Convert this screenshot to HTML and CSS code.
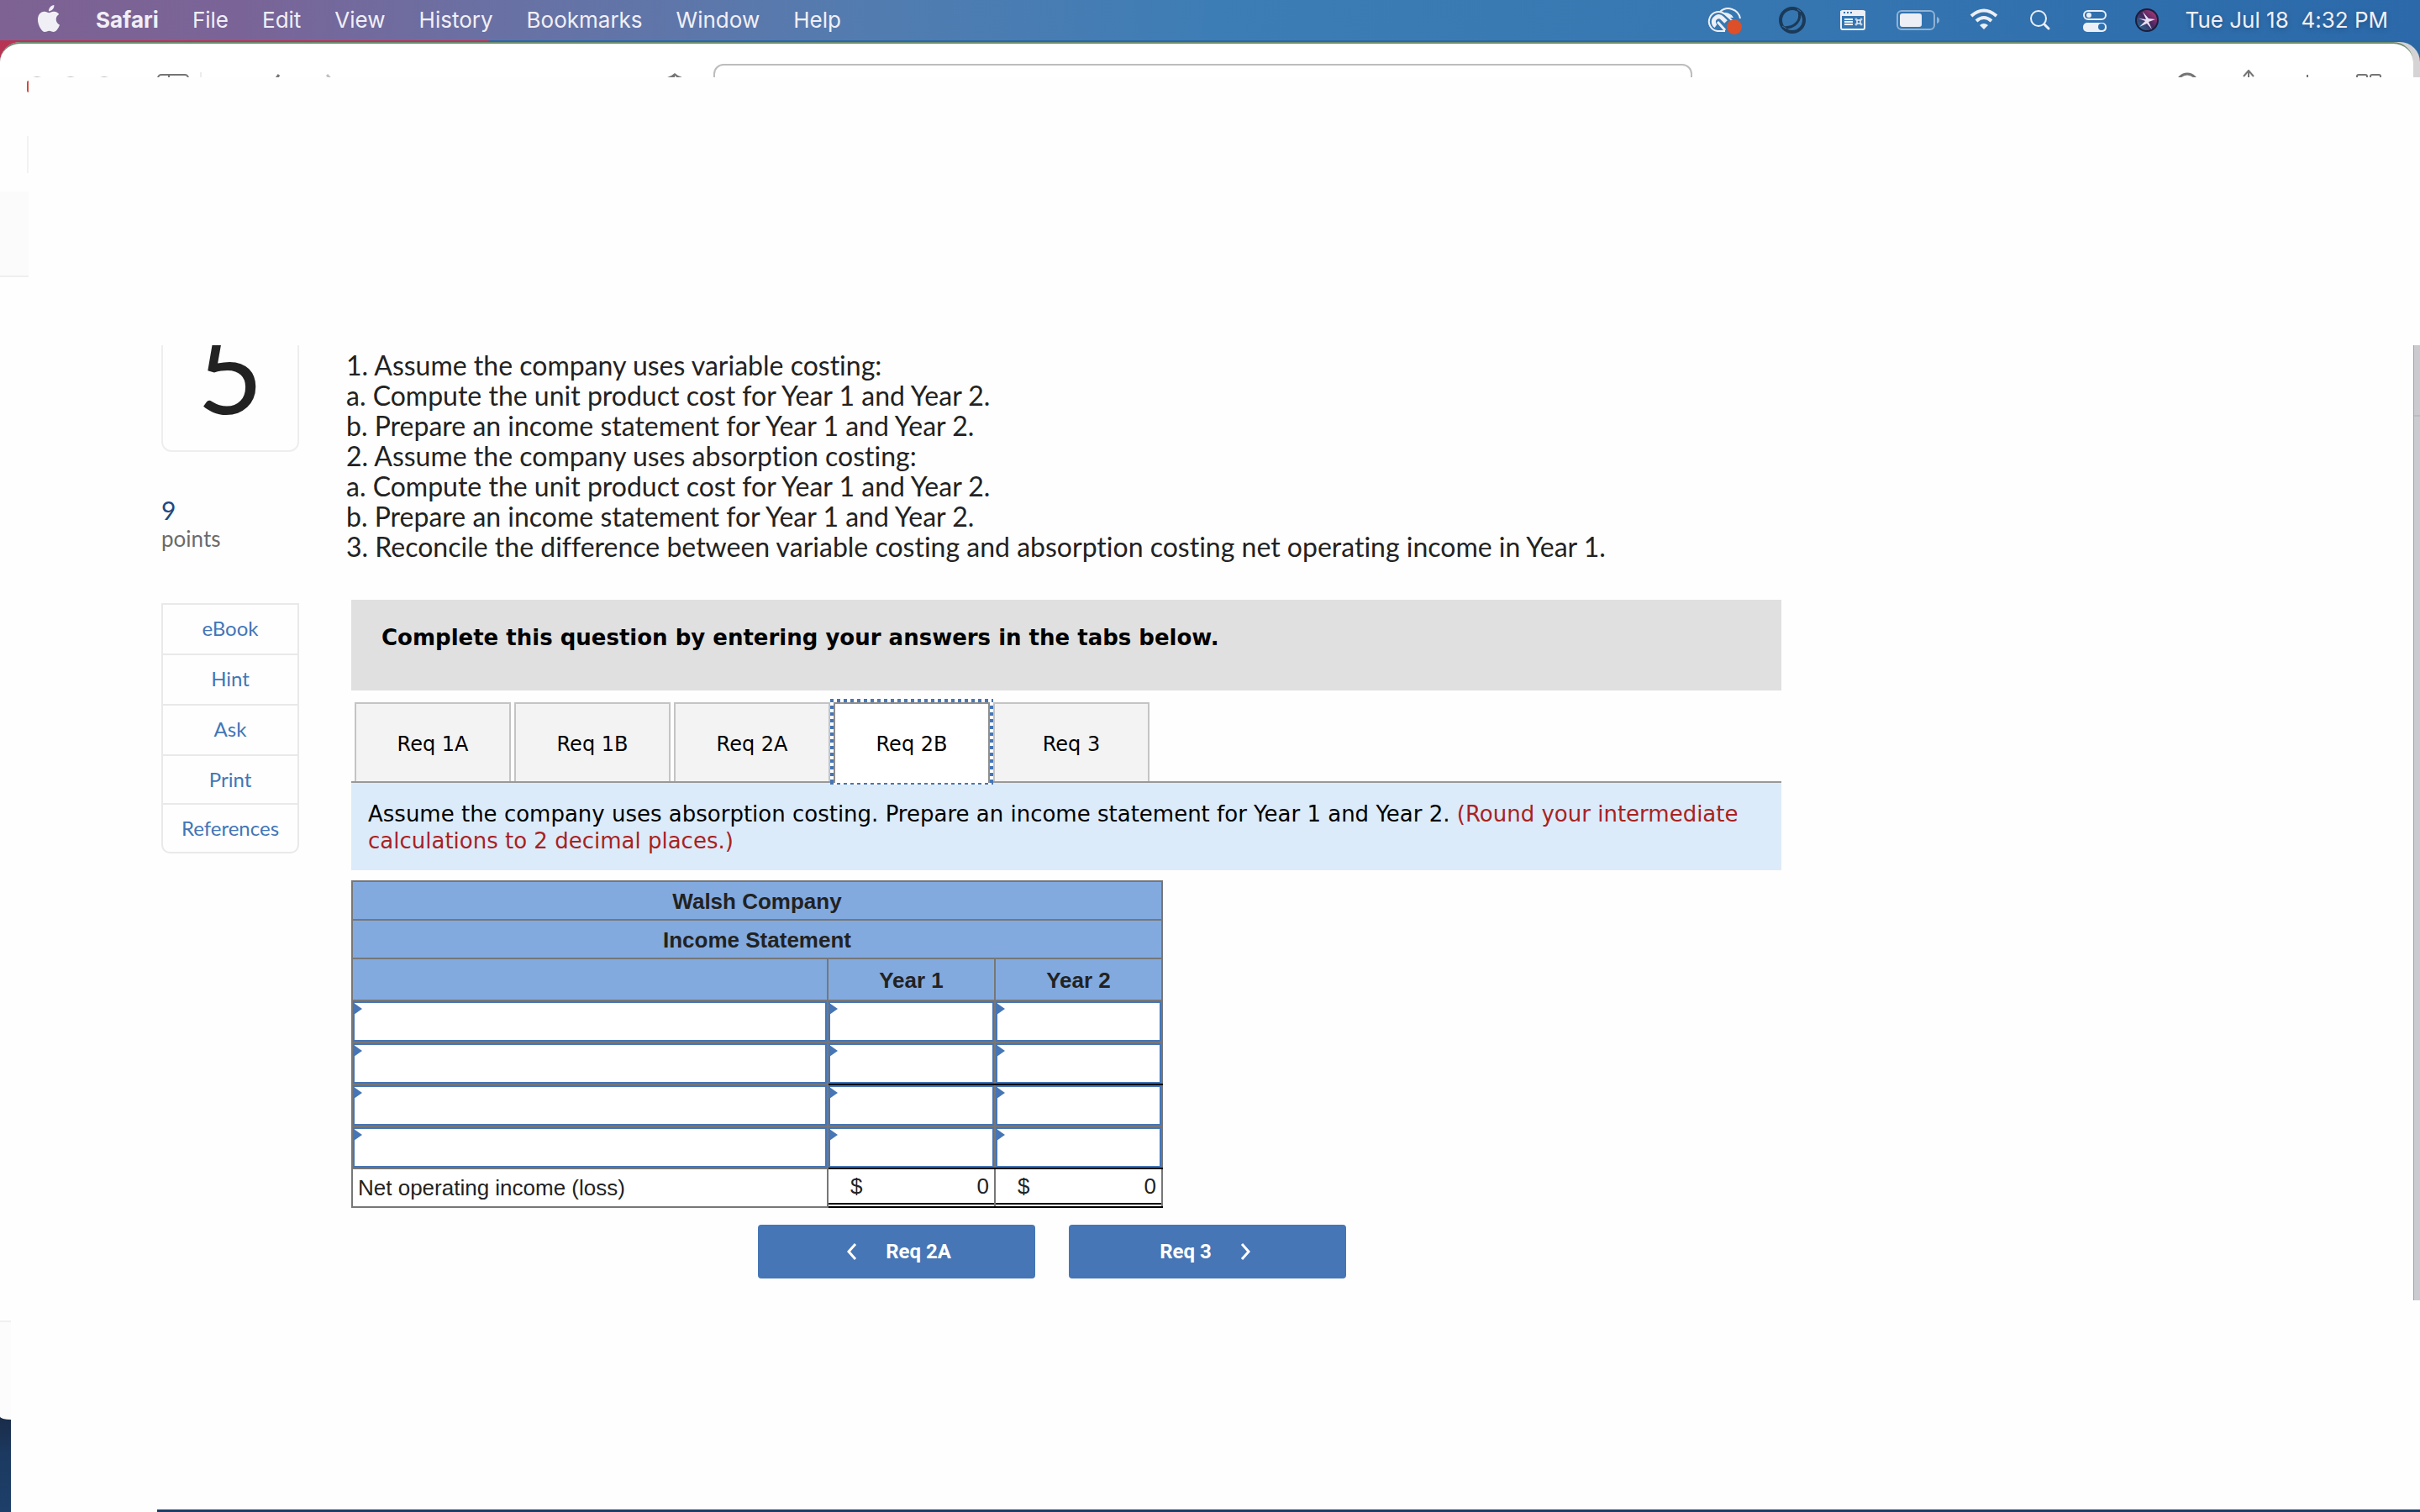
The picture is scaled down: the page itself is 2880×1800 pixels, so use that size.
FILE: index.html
```
<!DOCTYPE html>
<html lang="en">
<head>
  <meta charset="UTF-8" />
  <meta name="viewport" content="width=device-width, initial-scale=1.0" />
  <title>Walsh Company - Income Statement</title>
  <link rel="stylesheet" href="styles.css">
</head>
<body>
  <header class="menubar">
    <nav class="menus">
      <button class="apple" aria-label="Apple menu">
        <svg width="32" height="32" viewBox="0 0 24 24" fill="currentColor"><path d="M12.152 6.896c-.948 0-2.415-1.078-3.96-1.04-2.04.027-3.91 1.183-4.961 3.014-2.117 3.675-.546 9.103 1.519 12.09 1.013 1.454 2.208 3.09 3.792 3.039 1.52-.065 2.09-.987 3.935-.987 1.831 0 2.35.987 3.96.948 1.637-.026 2.676-1.48 3.676-2.948 1.156-1.688 1.636-3.325 1.662-3.415-.039-.013-3.182-1.221-3.22-4.857-.026-3.04 2.48-4.494 2.597-4.559-1.429-2.09-3.623-2.324-4.39-2.376-2-.156-3.675 1.09-4.61 1.09zM15.53 3.83c.843-1.012 1.4-2.427 1.245-3.83-1.207.052-2.662.805-3.532 1.818-.78.896-1.454 2.338-1.273 3.714 1.338.104 2.715-.688 3.559-1.701"/></svg>
      </button>
      <button class="app-name">Safari</button>
      <button>File</button>
      <button>Edit</button>
      <button>View</button>
      <button>History</button>
      <button>Bookmarks</button>
      <button>Window</button>
      <button>Help</button>
    </nav>
    <div class="status">
      <!-- creative cloud -->
      <svg width="52" height="48" viewBox="0 0 52 48" fill="none">
        <path d="M18 14A14.500 14.500 0 0 1 42 22" stroke="#eceff5" stroke-width="2"/>
        <path d="M20 16A11 11 0 0 1 34 21L28 21Q25 17 20 16Z" fill="#eceff5"/>
        <path d="M24 37H15A11.500 11.500 0 1 1 24 17L33 25" stroke="#eceff5" stroke-width="2"/>
        <path d="M13 31A6 6 0 0 1 13 21Q17 18 21 22L25 26" stroke="#eceff5" stroke-width="5"/>
        <path d="M15 26L24 36" stroke="#eceff5" stroke-width="3"/>
        <circle cx="35" cy="32" r="9" fill="#dc4f28"/>
      </svg>
      <!-- sync ring -->
      <svg width="42" height="48" viewBox="0 0 42 48" fill="none" stroke="#1b3a58">
        <circle cx="20" cy="24" r="14" stroke-width="4"/>
        <path d="M28 14C31 25 23 33 10 33" stroke-width="3"/>
        <path d="M26 11L30 14M8 31L13 34" stroke="#3474af" stroke-width="1"/>
      </svg>
      <!-- shortcut window -->
      <svg width="36" height="48" viewBox="0 0 36 48" fill="none">
        <rect x="4" y="13" width="28" height="22" rx="2" stroke="#eceff5" stroke-width="2"/>
        <path d="M3 13H33V19H3Z" fill="#eceff5"/>
        <path d="M7 15h2M11 15h2M15 15h2" stroke="#3474af" stroke-width="2"/>
        <path d="M8 23H18M8 26H18M8 29H18" stroke="#eceff5" stroke-width="2"/>
        <path d="M23 24H27V28H23ZM23 24V23A1 1 0 1 0 22 24H28A1 1 0 1 0 27 23V29A1 1 0 1 0 28 28H22A1 1 0 1 0 23 29Z" stroke="#eceff5" stroke-width="1"/>
      </svg>
      <!-- battery -->
      <svg width="56" height="48" viewBox="0 0 56 48" fill="none">
        <rect x="3" y="13" width="44" height="22" rx="5" stroke="#8fb2d4" stroke-width="2"/>
        <rect x="6" y="16" width="26" height="16" rx="3" fill="#eceff5"/>
        <path d="M50 20Q53 21 53 24Q53 27 50 28Z" fill="#8fb2d4"/>
      </svg>
      <!-- wifi -->
      <svg width="36" height="48" viewBox="0 0 36 48" fill="none" stroke="#eceff5" stroke-width="4">
        <path d="M3 19Q18 6 33 19"/>
        <path d="M9 25Q18 17 27 25"/>
        <path d="M18 35L13 30Q18 26 23 30Z" fill="#eceff5" stroke="none"/>
      </svg>
      <!-- search -->
      <svg width="36" height="48" viewBox="0 0 36 48" fill="none" stroke="#eceff5" stroke-linecap="round">
        <circle cx="15" cy="22" r="9" stroke-width="2"/>
        <path d="M22 29L27 34" stroke-width="3"/>
      </svg>
      <!-- control center -->
      <svg width="30" height="48" viewBox="0 0 30 48" fill="none">
        <rect x="1" y="13" width="26" height="10" rx="5" stroke="#eceff5" stroke-width="2"/>
        <circle cx="7" cy="18" r="3" fill="#eceff5"/>
        <rect x="0" y="27" width="28" height="11" rx="5" fill="#eceff5"/>
        <circle cx="22" cy="32" r="4" fill="#3070ae"/>
      </svg>
      <!-- siri -->
      <svg width="28" height="48" viewBox="0 0 28 48">
        <defs>
          <linearGradient id="siri" x1="0" y1="1" x2="1" y2="0">
            <stop offset="0" stop-color="#1d7f9c"/>
            <stop offset=".5" stop-color="#43265f"/>
            <stop offset="1" stop-color="#c23b7c"/>
          </linearGradient>
        </defs>
        <circle cx="14" cy="24" r="14" fill="#1d1c3c"/>
        <circle cx="14" cy="24" r="12" fill="url(#siri)"/>
        <path d="M13 23L9 14L16 22L24 23L16 26L20 35L14 28L5 32L12 25L4 22Z" fill="#e9dff5"/>
      </svg>
      <time>Tue Jul 18&nbsp; 4:32 PM</time>
    </div>
  </header>

  <div class="window-top">
    <div class="back-window">
      <div class="toolbar">
        <div class="lights"><span></span><span></span><span></span></div>
        <svg class="icon-sidebar" width="38" height="28" viewBox="0 0 38 28" fill="none" stroke="#757575" stroke-width="2"><rect x="1" y="1" width="36" height="26" rx="4"/><path d="M14 1V27"/></svg>
        <span class="divider"></span>
        <svg class="icon-back" width="20" height="28" viewBox="0 0 20 28" fill="none" stroke="#757575" stroke-width="3"><path d="M10 1L2 12L10 24"/></svg>
        <svg class="icon-forward" width="20" height="28" viewBox="0 0 20 28" fill="none" stroke="#c0c0c0" stroke-width="3"><path d="M5 1L15 12L5 24"/></svg>
        <svg class="icon-shield" width="30" height="32" viewBox="0 0 30 32"><path d="M1 6Q10 5 15 0Q20 5 29 6V18Q27 26 15 32Q3 26 1 18Z" fill="#757575"/><path d="M15 3V29Q25 25 26 18V8Q19 7 15 3Z" fill="#fff"/></svg>
        <input class="address" type="text" aria-label="Address" />
        <svg class="icon-reload" width="26" height="28" viewBox="0 0 26 28" fill="none" stroke="#757575" stroke-width="3"><circle cx="13" cy="14" r="12"/></svg>
        <svg class="icon-share" width="14" height="28" viewBox="0 0 14 28" fill="none" stroke="#757575" stroke-width="2"><path d="M1 8L7 1L13 8M7 1V22"/></svg>
        <svg class="icon-plus" width="26" height="28" viewBox="0 0 26 28" fill="none" stroke="#757575" stroke-width="2"><path d="M13 0V26M0 13H26"/></svg>
        <svg class="icon-tabs" width="30" height="28" viewBox="0 0 30 28" fill="none" stroke="#757575" stroke-width="2"><rect x="1" y="1" width="12" height="20" rx="2"/><rect x="17" y="1" width="12" height="20" rx="2"/></svg>
      </div>
    </div>
  </div>

  <div class="left-edge">
    <div class="edge-light"></div>
    <div class="edge-field"></div>
    <div class="edge-block"></div>
  </div>

  <div class="page">
    <aside class="sidebar">
      <div class="number">5</div>
      <div class="score">9</div>
      <div class="points">points</div>
      <nav class="tools">
        <a href="#">eBook</a>
        <a href="#">Hint</a>
        <a href="#">Ask</a>
        <a href="#">Print</a>
        <a href="#">References</a>
      </nav>
    </aside>

    <main class="content">
      <p class="question">
        1. Assume the company uses variable costing:<br>
        a. Compute the unit product cost for Year 1 and Year 2.<br>
        b. Prepare an income statement for Year 1 and Year 2.<br>
        2. Assume the company uses absorption costing:<br>
        a. Compute the unit product cost for Year 1 and Year 2.<br>
        b. Prepare an income statement for Year 1 and Year 2.<br>
        3. Reconcile the difference between variable costing and absorption costing net operating income in Year 1.
      </p>

      <section class="panel">
        <div class="banner">Complete this question by entering your answers in the tabs below.</div>

        <div class="tabs" role="tablist">
          <button class="tab" role="tab">Req 1A</button>
          <button class="tab" role="tab">Req 1B</button>
          <button class="tab" role="tab">Req 2A</button>
          <button class="tab active" role="tab" aria-selected="true">Req 2B</button>
          <button class="tab" role="tab">Req 3</button>
        </div>

        <div class="instruction">
          Assume the company uses absorption costing. Prepare an income statement for Year 1 and Year 2. <span class="note">(Round your intermediate calculations to 2 decimal places.)</span>
        </div>

        <table class="statement">
          <colgroup>
            <col>
            <col class="year">
            <col class="year">
          </colgroup>
          <thead>
            <tr><th colspan="3">Walsh Company</th></tr>
            <tr><th colspan="3">Income Statement</th></tr>
            <tr class="years"><th></th><th>Year 1</th><th>Year 2</th></tr>
          </thead>
          <tbody>
            <tr class="entry">
              <td><input type="text" aria-label="Item 1" /></td>
              <td><input type="text" aria-label="Item 1, Year 1" /></td>
              <td><input type="text" aria-label="Item 1, Year 2" /></td>
            </tr>
            <tr class="entry subtotal">
              <td><input type="text" aria-label="Item 2" /></td>
              <td><input type="text" aria-label="Item 2, Year 1" /></td>
              <td><input type="text" aria-label="Item 2, Year 2" /></td>
            </tr>
            <tr class="entry">
              <td><input type="text" aria-label="Item 3" /></td>
              <td><input type="text" aria-label="Item 3, Year 1" /></td>
              <td><input type="text" aria-label="Item 3, Year 2" /></td>
            </tr>
            <tr class="entry subtotal">
              <td><input type="text" aria-label="Item 4" /></td>
              <td><input type="text" aria-label="Item 4, Year 1" /></td>
              <td><input type="text" aria-label="Item 4, Year 2" /></td>
            </tr>
            <tr class="total">
              <td>Net operating income (loss)</td>
              <td><div class="amount"><span>$</span><span>0</span></div></td>
              <td><div class="amount"><span>$</span><span>0</span></div></td>
            </tr>
          </tbody>
        </table>

        <div class="pager">
          <button class="prev">
            <svg width="12" height="22" viewBox="0 0 12 22" fill="none" stroke="currentColor" stroke-width="3"><path d="M10 2L2 11L10 20"/></svg>
            Req 2A
          </button>
          <button class="next">
            Req 3
            <svg width="12" height="22" viewBox="0 0 12 22" fill="none" stroke="currentColor" stroke-width="3"><path d="M2 2L10 11L2 20"/></svg>
          </button>
        </div>
      </section>
    </main>

    <div class="right-edge"></div>
  </div>

  <footer class="bottom">
    <div class="corner"><div class="corner-curve"></div></div>
    <div class="dock-line"></div>
  </footer>
</body>
</html>
```
FILE: styles.css
```
:root {
  --blue: #4676b5;
  --grid: #777;
  --line: #e9e9e9;
}

* {
  box-sizing: border-box;
}

body {
  margin: 0;
  min-height: 100vh;
  display: flex;
  flex-direction: column;
  background: #fefefe;
  color: #222;
  font-family: Lato, sans-serif;
  font-variant-ligatures: none;
}

button {
  border: 0;
  padding: 0;
  background: none;
  color: inherit;
  font: inherit;
}

svg {
  display: block;
  flex: none;
}

/* menu bar */
.menubar {
  display: flex;
  justify-content: space-between;
  align-items: center;
  height: 48px;
  padding: 0 38px 0 42px;
  background: linear-gradient(to right, #7d6293, #7a6497 10%, #6a70a3 20%, #527cb0 36%, #3d7db5 50%, #3778b2 70%, #2b69aa);
  color: #f1eff6;
  font-family: Inter, sans-serif;
  font-size: 26px;
  line-height: 32px;
  text-shadow: 0 2px 6px rgba(0, 0, 0, 0.25);
}

.menus {
  display: flex;
  align-items: center;
  gap: 40px;
}

.apple {
  margin-top: -4px;
}

.app-name {
  font-weight: 700;
}

.status {
  display: flex;
  align-items: center;
  gap: 32px;
}

/* top of the browser window */
.window-top {
  height: 44px;
  overflow: hidden;
  background: linear-gradient(to right, #b83455 580px, #2b67a5 584px);
}

.back-window {
  margin-top: 2px;
  border-radius: 24px 24px 0 0;
  background: #d6d3d4;
}

.toolbar {
  display: flex;
  align-items: flex-start;
  height: 60px;
  margin-right: 8px;
  padding: 24px 38px 0 32px;
  border-top: 2px solid #6b8c70;
  border-radius: 24px 24px 0 0;
  background: #fff;
}

.lights {
  display: flex;
  gap: 16px;
  margin: 15px 51px 0 0;
}

.lights span {
  width: 24px;
  height: 24px;
  border: 1px solid #bbb;
  border-radius: 50%;
}

.icon-sidebar {
  margin: 12px 13px 0 0;
}

.divider {
  width: 2px;
  height: 30px;
  margin: 10px 82px 0 0;
  background: #ececec;
}

.icon-back {
  margin: 12px 42px 0 0;
}

.icon-forward {
  margin: 12px 384px 0 0;
}

.icon-shield {
  margin: 11px 31px 0 0;
}

.address {
  flex: 1;
  height: 56px;
  border: 2px solid #bdbdbd;
  border-radius: 12px;
  background: #fff;
}

.icon-reload {
  margin: 10px 53px 0 576px;
}

.icon-share {
  margin: 7px 50px 0 0;
}

.icon-plus {
  margin: 13px 45px 0 0;
}

.icon-tabs {
  margin-top: 12px;
}

/* strip left visible at the window's left side */
.left-edge {
  width: 34px;
  height: 319px;
  padding-top: 4px;
}

.edge-light {
  width: 2px;
  height: 14px;
  margin-left: 32px;
  border-radius: 2px 0 0 2px;
  background: #d5483c;
}

.edge-field {
  width: 2px;
  height: 44px;
  margin: 52px 0 0 32px;
  background: #f2f2f2;
}

.edge-block {
  height: 102px;
  margin-top: 22px;
  border-bottom: 2px solid #efefef;
  background: #fbfbfb;
}

/* page */
.page {
  display: flex;
  gap: 56px;
  padding-left: 192px;
  overflow: hidden;
}

.sidebar {
  flex: none;
  width: 164px;
}

.number {
  height: 192px;
  margin-top: -65px;
  border: 2px solid #eee;
  border-radius: 12px;
  font-size: 136px;
  line-height: 186px;
  text-align: center;
}

.score {
  margin-top: 51px;
  color: #24477f;
  font-size: 30px;
  line-height: 36px;
}

.points {
  color: #6b6b6b;
  font-size: 26px;
  line-height: 32px;
}

.tools {
  margin-top: 61px;
  border: 2px solid var(--line);
  border-radius: 0 0 10px 10px;
}

.tools a {
  display: block;
  padding: 12px 0 14px;
  border-top: 2px solid var(--line);
  color: #4176b8;
  font-size: 24px;
  line-height: 32px;
  text-align: center;
  text-decoration: none;
}

.tools a:first-child {
  border-top: 0;
}

.tools a:nth-child(n + 4) {
  padding: 12px 0;
}

.content {
  flex: 1;
  max-width: 1708px;
  padding-bottom: 26px;
}

.question {
  margin: 6px 0 45px;
  font-size: 32px;
  line-height: 36px;
}

.panel {
  margin-left: 6px;
  color: #000;
  font-family: "DejaVu Sans", Verdana, sans-serif;
}

.banner {
  padding: 29px 36px 47px;
  background: #e0e0e0;
  font-size: 26px;
  font-weight: 700;
  line-height: 32px;
}

.tabs {
  display: flex;
  gap: 4px;
  margin-top: 14px;
  padding-left: 4px;
  border-bottom: 2px solid #999;
}

.tab {
  position: relative;
  width: 186px;
  height: 94px;
  padding-top: 4px;
  border: 2px solid #c4c4c4;
  border-bottom: 0;
  background: #f3f3f3;
  font-size: 24px;
}

.tab.active {
  z-index: 1;
  height: 96px;
  margin-bottom: -2px;
  padding-top: 2px;
  border-color: #8f8f8f;
  background: #fff;
}

/* focus ring of square dots */
.tab.active::after {
  content: "";
  position: absolute;
  inset: -6px -6px -2px;
  background:
    repeating-linear-gradient(to right, var(--blue) 0 4px, #fff 4px 8px) top / 100% 4px no-repeat,
    repeating-linear-gradient(to right, var(--blue) 0 4px, #fff 4px 8px) bottom / 100% 2px no-repeat,
    repeating-linear-gradient(to bottom, var(--blue) 0 4px, #fff 4px 8px) left / 4px 100% no-repeat,
    repeating-linear-gradient(to bottom, var(--blue) 0 4px, #fff 4px 8px) right / 4px 100% no-repeat;
}

.instruction {
  padding: 21px 20px 19px;
  background: #dcebf9;
  font-size: 26px;
  line-height: 32px;
}

.note {
  color: #a8221f;
}

/* income statement */
.statement {
  width: 966px;
  margin-top: 12px;
  border-collapse: collapse;
  table-layout: fixed;
  background: #fff;
  color: #222;
  font-family: "Liberation Sans", Arial, sans-serif;
  font-size: 26px;
  line-height: 30px;
}

.year {
  width: 199px;
}

.statement th,
.statement td {
  height: 46px;
  padding: 0;
  border: 2px solid var(--grid);
}

.statement th {
  padding-top: 2px;
  background: #82aadf;
}

.statement .years th {
  height: 50px;
}

.statement .entry td {
  position: relative;
  height: 50px;
}

.entry input {
  display: block;
  width: 100%;
  height: 48px;
  padding: 0 12px;
  border: 2px solid var(--blue);
  background: #fff;
  font: inherit;
  text-align: inherit;
}

.entry td::before {
  content: "";
  position: absolute;
  top: 2px;
  left: 1px;
  width: 10px;
  height: 14px;
  background: var(--blue);
  clip-path: polygon(0 0, 100% 50%, 0 100%);
}

.statement .subtotal td + td {
  border-bottom-color: #000;
}

.statement .total td {
  padding-left: 6px;
}

.statement .total td + td {
  padding: 0;
  border-top-color: #000;
  border-bottom-color: #000;
  vertical-align: top;
}

.amount {
  display: flex;
  justify-content: space-between;
  margin-bottom: 2px;
  padding: 5px 6px 5px 26px;
  border-bottom: 2px solid #000;
}

/* previous / next */
.pager {
  display: flex;
  justify-content: center;
  gap: 40px;
  margin-top: 20px;
  padding-right: 34px;
}

.pager button {
  display: flex;
  justify-content: center;
  align-items: center;
  gap: 34px;
  width: 330px;
  height: 64px;
  border-radius: 4px;
  background: var(--blue);
  color: #fff;
  font-family: Roboto, sans-serif;
  font-size: 24px;
  font-weight: 700;
}

.pager .prev {
  padding-left: 6px;
}

.pager .next {
  padding-right: 6px;
}

.right-edge {
  width: 8px;
  margin-left: auto;
  border-left: 1px solid #9fa1a7;
  background: linear-gradient(#cbcace 83px, #bdbdc1 83px 85px, #cacbd0 85px);
}

/* bottom of the screen */
.bottom {
  display: flex;
  flex: 1;
  justify-content: space-between;
  align-items: flex-end;
}

.corner {
  align-self: stretch;
  width: 13px;
  margin-top: 24px;
  border-top: 2px solid #f0f0f0;
  background: linear-gradient(#fefefe 112px, #1a2b48 112px, #1c3a61 160px, #1d3f69);
}

.corner-curve {
  height: 116px;
  border-radius: 0 0 0 28px / 0 0 0 8px;
  background: #fcfcfc;
}

.dock-line {
  width: calc(100% - 187px);
  height: 3px;
  background: #1c3d66;
}
```
